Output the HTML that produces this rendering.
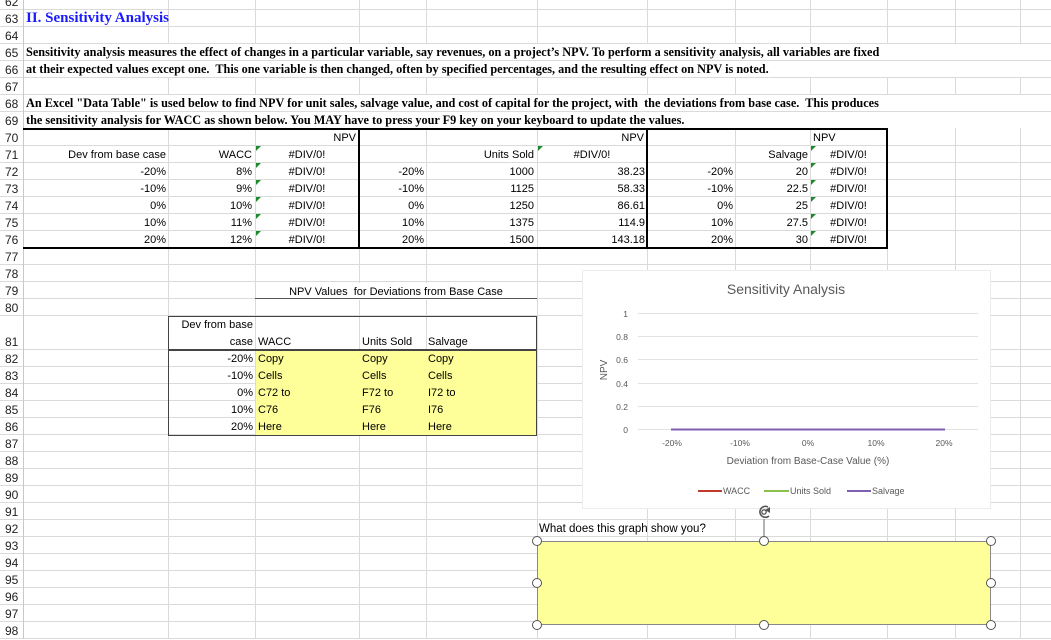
<!DOCTYPE html>
<html><head><meta charset="utf-8"><style>
*{margin:0;padding:0;box-sizing:border-box}
body{width:1051px;height:639px;overflow:hidden;background:#fff;position:relative;font-family:"Liberation Sans",Arial,sans-serif;font-size:11px;color:#000}
.h{position:absolute;left:0;width:1051px;height:1px;background:#dadada}
.v{position:absolute;top:0;height:639px;width:1px;background:#dadada}
.n{position:absolute;left:0;width:23px;height:17px;line-height:18px;font-size:12px;color:#222;padding-left:5px}
.t{position:absolute;height:17px;line-height:18px;white-space:nowrap}
.r{text-align:right}
.c{text-align:center}
.p{position:absolute;left:24px;width:1027px;height:16px;background:#fff;font-family:"Liberation Serif",serif;font-weight:bold;font-size:12.25px;line-height:17px;padding-left:2px;white-space:nowrap}
.g{position:absolute;width:0;height:0;border-top:5px solid #1e8a2e;border-right:5px solid transparent}
.hd{position:absolute;width:10px;height:10px;border:1.5px solid #555;border-radius:50%;background:#fff}
</style></head><body>
<div class="h" style="top:9px"></div><div class="h" style="top:26px"></div><div class="h" style="top:43px"></div><div class="h" style="top:60px"></div><div class="h" style="top:77px"></div><div class="h" style="top:94px"></div><div class="h" style="top:111px"></div><div class="h" style="top:145px"></div><div class="h" style="top:162px"></div><div class="h" style="top:179px"></div><div class="h" style="top:196px"></div><div class="h" style="top:213px"></div><div class="h" style="top:230px"></div><div class="h" style="top:264px"></div><div class="h" style="top:281px"></div><div class="h" style="top:298px"></div><div class="h" style="top:315px"></div><div class="h" style="top:349px"></div><div class="h" style="top:366px"></div><div class="h" style="top:383px"></div><div class="h" style="top:400px"></div><div class="h" style="top:417px"></div><div class="h" style="top:434px"></div><div class="h" style="top:451px"></div><div class="h" style="top:468px"></div><div class="h" style="top:485px"></div><div class="h" style="top:502px"></div><div class="h" style="top:519px"></div><div class="h" style="top:536px"></div><div class="h" style="top:553px"></div><div class="h" style="top:570px"></div><div class="h" style="top:587px"></div><div class="h" style="top:604px"></div><div class="h" style="top:621px"></div><div class="h" style="top:638px"></div>
<div class="v" style="left:23px;background:#c8c8c8"></div><div class="v" style="left:168px"></div><div class="v" style="left:255px"></div><div class="v" style="left:359px"></div><div class="v" style="left:426px"></div><div class="v" style="left:537px"></div><div class="v" style="left:647px"></div><div class="v" style="left:735px"></div><div class="v" style="left:810px"></div><div class="v" style="left:887px"></div><div class="v" style="left:955px"></div><div class="v" style="left:1020px"></div>

<div class="n" style="top:-7px">62</div><div class="n" style="top:10px">63</div><div class="n" style="top:27px">64</div><div class="n" style="top:44px">65</div><div class="n" style="top:61px">66</div><div class="n" style="top:78px">67</div><div class="n" style="top:95px">68</div><div class="n" style="top:112px">69</div><div class="n" style="top:129px">70</div><div class="n" style="top:146px">71</div><div class="n" style="top:163px">72</div><div class="n" style="top:180px">73</div><div class="n" style="top:197px">74</div><div class="n" style="top:214px">75</div><div class="n" style="top:231px">76</div><div class="n" style="top:248px">77</div><div class="n" style="top:265px">78</div><div class="n" style="top:282px">79</div><div class="n" style="top:299px">80</div><div class="n" style="top:333px">81</div><div class="n" style="top:350px">82</div><div class="n" style="top:367px">83</div><div class="n" style="top:384px">84</div><div class="n" style="top:401px">85</div><div class="n" style="top:418px">86</div><div class="n" style="top:435px">87</div><div class="n" style="top:452px">88</div><div class="n" style="top:469px">89</div><div class="n" style="top:486px">90</div><div class="n" style="top:503px">91</div><div class="n" style="top:520px">92</div><div class="n" style="top:537px">93</div><div class="n" style="top:554px">94</div><div class="n" style="top:571px">95</div><div class="n" style="top:588px">96</div><div class="n" style="top:605px">97</div><div class="n" style="top:622px">98</div>

<div class="t" style="left:26px;top:9px;font-family:'Liberation Serif',serif;font-weight:bold;font-size:15px;color:#1a1aff;line-height:18px">II. Sensitivity Analysis</div>
<div class="p" style="top:44px">Sensitivity analysis measures the effect of changes in a particular variable, say revenues, on a project’s NPV. To perform a sensitivity analysis, all variables are fixed</div>
<div class="p" style="top:61px">at their expected values except one.&nbsp; This one variable is then changed, often by specified percentages, and the resulting effect on NPV is noted.</div>
<div class="p" style="top:95px">An Excel "Data Table" is used below to find NPV for unit sales, salvage value, and cost of capital for the project, with&nbsp; the deviations from base case.&nbsp; This produces</div>
<div class="p" style="top:112px">the sensitivity analysis for WACC as shown below. You MAY have to press your F9 key on your keyboard to update the values.</div>

<div style="position:absolute;left:23px;top:128px;width:865px;height:121px;border:2px solid #000;border-left:none"></div>
<div style="position:absolute;left:358px;top:128px;width:2px;height:121px;background:#000"></div>
<div style="position:absolute;left:646px;top:128px;width:2px;height:121px;background:#000"></div>

<div class="t r" style="left:300px;width:56px;top:129px">NPV</div>
<div class="t r" style="left:590px;width:54px;top:129px">NPV</div>
<div class="t" style="left:813px;top:129px">NPV</div>

<div class="t r" style="left:25px;width:141px;top:146px">Dev from base case</div>
<div class="t r" style="left:170px;width:82px;top:146px">WACC</div>
<div class="t c" style="left:257px;width:100px;top:146px">#DIV/0!</div>
<div class="t r" style="left:430px;width:104px;top:146px">Units Sold</div>
<div class="t c" style="left:539px;width:106px;top:146px">#DIV/0!</div>
<div class="t r" style="left:737px;width:71px;top:146px">Salvage</div>
<div class="t c" style="left:812px;width:73px;top:146px">#DIV/0!</div>

<div class="t r" style="left:25px;width:141px;top:163px">-20%</div><div class="t r" style="left:170px;width:82px;top:163px">8%</div><div class="t c" style="left:257px;width:100px;top:163px">#DIV/0!</div><div class="t r" style="left:361px;width:63px;top:163px">-20%</div><div class="t r" style="left:430px;width:104px;top:163px">1000</div><div class="t r" style="left:539px;width:106px;top:163px">38.23</div><div class="t r" style="left:649px;width:84px;top:163px">-20%</div><div class="t r" style="left:737px;width:71px;top:163px">20</div><div class="t c" style="left:812px;width:73px;top:163px">#DIV/0!</div>
<div class="t r" style="left:25px;width:141px;top:180px">-10%</div><div class="t r" style="left:170px;width:82px;top:180px">9%</div><div class="t c" style="left:257px;width:100px;top:180px">#DIV/0!</div><div class="t r" style="left:361px;width:63px;top:180px">-10%</div><div class="t r" style="left:430px;width:104px;top:180px">1125</div><div class="t r" style="left:539px;width:106px;top:180px">58.33</div><div class="t r" style="left:649px;width:84px;top:180px">-10%</div><div class="t r" style="left:737px;width:71px;top:180px">22.5</div><div class="t c" style="left:812px;width:73px;top:180px">#DIV/0!</div>
<div class="t r" style="left:25px;width:141px;top:197px">0%</div><div class="t r" style="left:170px;width:82px;top:197px">10%</div><div class="t c" style="left:257px;width:100px;top:197px">#DIV/0!</div><div class="t r" style="left:361px;width:63px;top:197px">0%</div><div class="t r" style="left:430px;width:104px;top:197px">1250</div><div class="t r" style="left:539px;width:106px;top:197px">86.61</div><div class="t r" style="left:649px;width:84px;top:197px">0%</div><div class="t r" style="left:737px;width:71px;top:197px">25</div><div class="t c" style="left:812px;width:73px;top:197px">#DIV/0!</div>
<div class="t r" style="left:25px;width:141px;top:214px">10%</div><div class="t r" style="left:170px;width:82px;top:214px">11%</div><div class="t c" style="left:257px;width:100px;top:214px">#DIV/0!</div><div class="t r" style="left:361px;width:63px;top:214px">10%</div><div class="t r" style="left:430px;width:104px;top:214px">1375</div><div class="t r" style="left:539px;width:106px;top:214px">114.9</div><div class="t r" style="left:649px;width:84px;top:214px">10%</div><div class="t r" style="left:737px;width:71px;top:214px">27.5</div><div class="t c" style="left:812px;width:73px;top:214px">#DIV/0!</div>
<div class="t r" style="left:25px;width:141px;top:231px">20%</div><div class="t r" style="left:170px;width:82px;top:231px">12%</div><div class="t c" style="left:257px;width:100px;top:231px">#DIV/0!</div><div class="t r" style="left:361px;width:63px;top:231px">20%</div><div class="t r" style="left:430px;width:104px;top:231px">1500</div><div class="t r" style="left:539px;width:106px;top:231px">143.18</div><div class="t r" style="left:649px;width:84px;top:231px">20%</div><div class="t r" style="left:737px;width:71px;top:231px">30</div><div class="t c" style="left:812px;width:73px;top:231px">#DIV/0!</div>

<div class="g" style="left:256px;top:146px"></div><div class="g" style="left:256px;top:163px"></div><div class="g" style="left:256px;top:180px"></div><div class="g" style="left:256px;top:197px"></div><div class="g" style="left:256px;top:214px"></div><div class="g" style="left:256px;top:231px"></div>
<div class="g" style="left:538px;top:146px"></div>
<div class="g" style="left:811px;top:146px"></div><div class="g" style="left:811px;top:163px"></div><div class="g" style="left:811px;top:180px"></div><div class="g" style="left:811px;top:197px"></div><div class="g" style="left:811px;top:214px"></div><div class="g" style="left:811px;top:231px"></div>

<div class="t c" style="left:256px;width:280px;top:283px;background:#fff">NPV Values&nbsp; for Deviations from Base Case</div>
<div style="position:absolute;left:255px;top:298px;width:282px;height:1px;background:#555"></div>
<div style="position:absolute;left:256px;top:350px;width:281px;height:86px;background:#ffff99"></div>
<div style="position:absolute;left:168px;top:316px;width:369px;height:120px;border:1.5px solid #444"></div>
<div style="position:absolute;left:168px;top:349px;width:369px;height:1.5px;background:#444"></div>
<div class="t r" style="left:170px;width:83px;top:316px">Dev from base</div>
<div class="t r" style="left:170px;width:83px;top:333px">case</div>
<div class="t" style="left:258px;top:333px">WACC</div><div class="t" style="left:362px;top:333px">Units Sold</div><div class="t" style="left:428px;top:333px">Salvage</div>
<div class="t r" style="left:170px;width:83px;top:350px">-20%</div><div class="t" style="left:258px;top:350px">Copy</div><div class="t" style="left:362px;top:350px">Copy</div><div class="t" style="left:428px;top:350px">Copy</div>
<div class="t r" style="left:170px;width:83px;top:367px">-10%</div><div class="t" style="left:258px;top:367px">Cells</div><div class="t" style="left:362px;top:367px">Cells</div><div class="t" style="left:428px;top:367px">Cells</div>
<div class="t r" style="left:170px;width:83px;top:384px">0%</div><div class="t" style="left:258px;top:384px">C72 to</div><div class="t" style="left:362px;top:384px">F72 to</div><div class="t" style="left:428px;top:384px">I72 to</div>
<div class="t r" style="left:170px;width:83px;top:401px">10%</div><div class="t" style="left:258px;top:401px">C76</div><div class="t" style="left:362px;top:401px">F76</div><div class="t" style="left:428px;top:401px">I76</div>
<div class="t r" style="left:170px;width:83px;top:418px">20%</div><div class="t" style="left:258px;top:418px">Here</div><div class="t" style="left:362px;top:418px">Here</div><div class="t" style="left:428px;top:418px">Here</div>

<div style="position:absolute;left:582px;top:270px;width:409px;height:239px;background:#fff;border:1px solid #ececec"></div>
<svg style="position:absolute;left:0;top:0" width="1051" height="639">
<g font-family="Liberation Sans, sans-serif" fill="#595959">
<text x="786" y="294" font-size="14" text-anchor="middle">Sensitivity Analysis</text>
<g stroke="#e2e2e2" stroke-width="1"><line x1="638" y1="313.5" x2="978" y2="313.5"/><line x1="638" y1="336.5" x2="978" y2="336.5"/><line x1="638" y1="359.5" x2="978" y2="359.5"/><line x1="638" y1="383.5" x2="978" y2="383.5"/><line x1="638" y1="406.5" x2="978" y2="406.5"/><line x1="638" y1="429.5" x2="978" y2="429.5"/></g>
<line x1="671" y1="429.5" x2="945" y2="429.5" stroke="#7f5fb0" stroke-width="2"/>
<g font-size="8.5" text-anchor="end"><text x="628" y="317">1</text><text x="628" y="340">0.8</text><text x="628" y="363">0.6</text><text x="628" y="387">0.4</text><text x="628" y="410">0.2</text><text x="628" y="433">0</text></g>
<g font-size="8.5" text-anchor="middle"><text x="672" y="446">-20%</text><text x="740" y="446">-10%</text><text x="808" y="446">0%</text><text x="876" y="446">10%</text><text x="944" y="446">20%</text></g>
<text x="808" y="464" font-size="10" text-anchor="middle">Deviation from Base-Case Value (%)</text>
<text transform="translate(607,370) rotate(-90)" font-size="10" text-anchor="middle">NPV</text>
<line x1="698" y1="491" x2="722" y2="491" stroke="#c0392b" stroke-width="2"/><text x="723" y="494" font-size="9">WACC</text>
<line x1="764" y1="491" x2="789" y2="491" stroke="#8dc04a" stroke-width="2"/><text x="790" y="494" font-size="9">Units Sold</text>
<line x1="847" y1="491" x2="871" y2="491" stroke="#7f5fb0" stroke-width="2"/><text x="872" y="494" font-size="9">Salvage</text>
</g>
<line x1="764" y1="519" x2="764" y2="541" stroke="#666" stroke-width="1"/>
<path d="M768 507 A5.5 5.5 0 1 0 769 516" fill="none" stroke="#555" stroke-width="1.6"/>
<path d="M765 510 L770 507 L770 513 Z" fill="#555"/>
<circle cx="764" cy="512" r="2.2" fill="none" stroke="#555" stroke-width="1.3"/>
</svg>
<div class="t" style="left:539px;top:520px;font-size:11.5px">What does this graph show you?</div>
<div style="position:absolute;left:537px;top:541px;width:454px;height:84px;background:#ffff99;border:1px solid #888"></div>
<div class="hd" style="left:532px;top:536px"></div><div class="hd" style="left:759px;top:536px"></div><div class="hd" style="left:986px;top:536px"></div>
<div class="hd" style="left:532px;top:578px"></div><div class="hd" style="left:986px;top:578px"></div>
<div class="hd" style="left:532px;top:620px"></div><div class="hd" style="left:759px;top:620px"></div><div class="hd" style="left:986px;top:620px"></div>
</body></html>
